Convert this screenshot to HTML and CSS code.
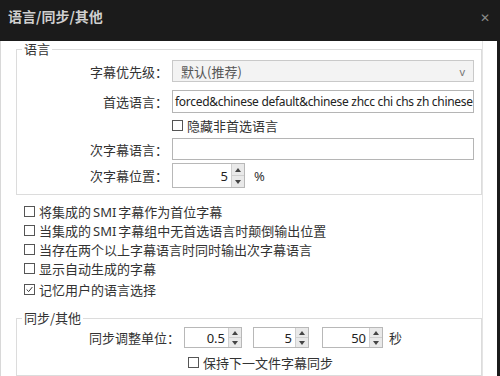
FILE: index.html
```html
<!DOCTYPE html>
<html lang="zh-CN">
<head>
  <meta charset="UTF-8" />
  <title>语言/同步/其他</title>
  <link rel="stylesheet" href="styles.css">
</head>
<body>

  <div class="window">
    <div class="titlebar">
      <span class="title">语言/同步/其他</span>
      <span class="close">&#x2715;</span>
    </div>

    <div class="body">
      <div class="panel">

        <!-- 语言 -->
        <fieldset class="group group-lang">
          <legend>语言</legend>
          <div class="row row-select">
            <label class="lbl">字幕优先级：</label>
            <div class="select">默认(推荐)<span class="caret">v</span></div>
          </div>
          <div class="row row-input">
            <label class="lbl">首选语言：</label>
            <div class="input latin">forced&amp;chinese default&amp;chinese zhcc chi chs zh chinese</div>
          </div>
          <div class="row row-check">
            <span class="check"><span class="box"></span>隐藏非首选语言</span>
          </div>
          <div class="row row-input2">
            <label class="lbl">次字幕语言：</label>
            <div class="input"></div>
          </div>
          <div class="row row-spin">
            <label class="lbl">次字幕位置：</label>
            <div class="spin spin-pos">
              <span class="val">5</span>
              <span class="btns"><i class="up"></i><i class="down"></i></span>
            </div>
            <span class="unit">%</span>
          </div>
        </fieldset>

        <!-- 选项 -->
        <div class="checks">
          <span class="check"><span class="box"></span>将集成的<span class="latin word">SMI</span>字幕作为首位字幕</span>
          <span class="check"><span class="box"></span>当集成的<span class="latin word">SMI</span>字幕组中无首选语言时颠倒输出位置</span>
          <span class="check"><span class="box"></span>当存在两个以上字幕语言时同时输出次字幕语言</span>
          <span class="check"><span class="box"></span>显示自动生成的字幕</span>
          <span class="check checked"><span class="box">
            <svg viewBox="0 0 11 11" width="11" height="11"><path d="M2 5.5 L4.5 8 L9 2.5" fill="none" stroke="#333" stroke-width="1.2"/></svg>
          </span>记忆用户的语言选择</span>
        </div>

        <!-- 同步/其他 -->
        <fieldset class="group group-sync">
          <legend>同步/其他</legend>
          <div class="row row-sync">
            <label class="lbl lbl-wide">同步调整单位：</label>
            <div class="spin spin-a">
              <span class="val">0.5</span>
              <span class="btns"><i class="up"></i><i class="down"></i></span>
            </div>
            <div class="spin spin-b">
              <span class="val">5</span>
              <span class="btns"><i class="up"></i><i class="down"></i></span>
            </div>
            <div class="spin spin-c">
              <span class="val">50</span>
              <span class="btns"><i class="up"></i><i class="down"></i></span>
            </div>
            <span class="unit unit-sec">秒</span>
          </div>
          <div class="row row-keep">
            <span class="check"><span class="box"></span>保持下一文件字幕同步</span>
          </div>
        </fieldset>

      </div>
    </div>
  </div>

</body>
</html>
```

FILE: styles.css
```css
html, body {
  margin: 0;
  padding: 0;
  background: #1b1b1b;
}

body {
  font-family: "Noto Sans CJK SC", "Noto Sans", sans-serif;
  font-size: 13px;
  color: #333;
}

.window {
  width: 500px;
  height: 376px;
  overflow: hidden;
  background: #1b1b1b;
}

.titlebar {
  height: 32px;
  display: flex;
  align-items: center;
  justify-content: space-between;
  padding: 0 10px 0 8px;
  box-sizing: border-box;
}

.title {
  color: #cfcfcf;
  font-weight: bold;
  font-size: 14px;
}

.close {
  color: #8a8a8a;
  font-size: 12px;
}

.body {
  background: #fff;
  margin-right: 3px;
  height: 344px;
  border-left: 1px solid #d8d8d8;
}

.panel {
  width: 483px;
  height: 344px;
  box-sizing: border-box;
  border-right: 1px solid #e4e4e4;
  margin-left: -1px;
}

.latin {
  font-family: "Noto Sans", "Noto Sans CJK SC", sans-serif;
}

.word {
  margin: 0 2px;
}

/* group boxes */
.group {
  margin: 0 0 0 16px;
  width: 466px;
  box-sizing: border-box;
  border: 1px solid #dcdcdc;
  padding: 0 7px 0 5px;
  min-width: 0;
}

.group legend {
  padding: 0 2px;
  line-height: 16px;
  color: #333;
}

.group-lang {
  margin-top: 9px;
  padding-top: 3px;
  padding-bottom: 6px;
}

.group-sync {
  margin-top: 11px;
  padding-top: 1px;
  padding-bottom: 3px;
}

.row {
  display: flex;
  align-items: center;
}

.lbl {
  width: 146px;
  margin-right: 4px;
  text-align: right;
  flex-shrink: 0;
}

.lbl-wide {
  width: 158px;
}

.row-select { height: 22px; margin-bottom: 8px; }
.row-input { height: 23px; margin-bottom: 1px; }
.row-check { height: 22px; margin-bottom: 2px; padding-left: 150px; }
.row-input2 { height: 22px; margin-bottom: 3px; }
.row-spin { height: 25px; }
.row-sync { height: 21px; }
.row-keep { height: 20px; margin-top: 4px; padding-left: 166px; }

.select {
  flex: 1;
  height: 22px;
  box-sizing: border-box;
  border: 1px solid #c9c9c9;
  background: #f3f3f3;
  color: #555;
  padding: 0 8px;
  display: flex;
  align-items: center;
  justify-content: space-between;
}

.caret {
  color: #777;
  font-family: "Noto Sans", sans-serif;
  font-size: 11px;
}

.input {
  flex: 1;
  height: 100%;
  box-sizing: border-box;
  border: 1px solid #b5b5b5;
  background: #fff;
  padding: 0 2px;
  display: flex;
  align-items: center;
  white-space: nowrap;
  overflow: hidden;
  color: #222;
}

.input.latin {
  font-size: 12px;
  letter-spacing: -0.3px;
}

/* spin boxes */
.spin {
  height: 100%;
  box-sizing: border-box;
  border: 1px solid #b8b8b8;
  background: #fff;
  display: flex;
  align-items: stretch;
  flex-shrink: 0;
}

.spin .val {
  flex: 1;
  text-align: right;
  padding-right: 3px;
  display: flex;
  align-items: center;
  justify-content: flex-end;
  font-family: "Noto Sans", sans-serif;
  color: #222;
}

.spin .btns {
  width: 12px;
  display: flex;
  flex-direction: column;
  border-left: 1px solid #cfcfcf;
  background: #e9e9e9;
}

.spin .btns i {
  flex: 1;
  display: flex;
  align-items: center;
  justify-content: center;
}

.spin .btns i + i {
  border-top: 1px solid #cfcfcf;
}

.spin .btns .up::after {
  content: "";
  border-left: 3px solid transparent;
  border-right: 3px solid transparent;
  border-bottom: 4px solid #444;
}

.spin .btns .down::after {
  content: "";
  border-left: 3px solid transparent;
  border-right: 3px solid transparent;
  border-top: 4px solid #444;
}

.spin-pos { width: 73px; }
.spin-a { width: 58px; }
.spin-b { width: 56px; margin-left: 11px; }
.spin-c { width: 61px; margin-left: 13px; }

.unit {
  margin-left: 9px;
  font-family: "Noto Sans", sans-serif;
}

.unit-sec {
  margin-left: 6px;
  font-family: "Noto Sans CJK SC", sans-serif;
}

/* checkboxes */
.check {
  display: flex;
  align-items: center;
  white-space: nowrap;
}

.check .box {
  width: 11px;
  height: 11px;
  box-sizing: border-box;
  border: 1px solid #555;
  margin-right: 4px;
  flex-shrink: 0;
  display: flex;
  align-items: center;
  justify-content: center;
  background: #fff;
}

.check .box svg {
  display: block;
}

.checks {
  margin-top: 7px;
  padding-left: 24px;
  display: flex;
  flex-direction: column;
}

.checks .check {
  height: 19px;
}

.checks .checked {
  margin-top: 2px;
}
```
